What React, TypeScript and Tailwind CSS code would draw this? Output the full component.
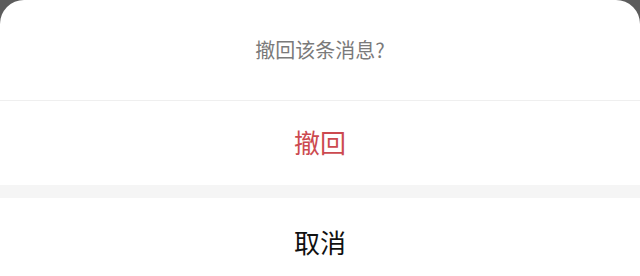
export default function App() {
  return (
    <div
      className="w-[640px] h-[276px] overflow-hidden bg-[#5c5c5c]"
      style={{ fontFamily: '"Noto Sans CJK SC", "Noto Sans", sans-serif' }}
    >
      <div className="bg-white rounded-t-[24px] flex flex-col">
        <div className="h-[100px] flex items-center justify-center border-b border-[#efefef] box-content">
          <p className="text-[20px] text-[#7a7a7a]">撤回该条消息?</p>
        </div>
        <button className="h-[84px] pb-[4px] flex items-center justify-center text-[26px] text-[#cc4a50]">
          撤回
        </button>
        <div className="h-[13px] bg-[#f5f5f5]" />
        <button className="h-[90px] pb-[4px] flex items-center justify-center text-[26px] text-[#111111]">
          取消
        </button>
      </div>
    </div>
  );
}
